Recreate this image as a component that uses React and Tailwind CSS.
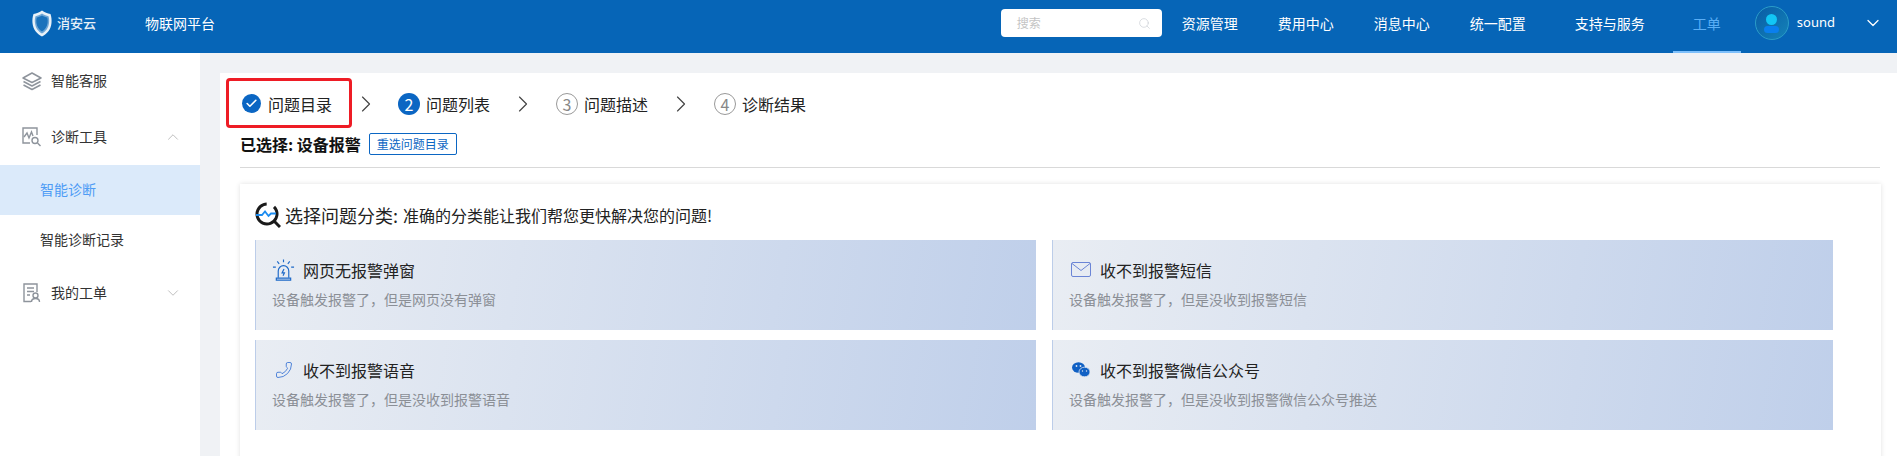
import React from 'react';
import { Check, ChevronDown, ChevronRight, ChevronUp, Phone, Search } from 'lucide-react';

const font = { fontFamily: '"Noto Sans CJK SC", "Noto Sans", sans-serif' };

const navItems = [
  { label: '资源管理', cls: 'ml-[20px]' },
  { label: '费用中心', cls: 'ml-[40px]' },
  { label: '消息中心', cls: 'ml-[40px]' },
  { label: '统一配置', cls: 'ml-[40px]' },
  { label: '支持与服务', cls: 'ml-[49px]' },
];

const Logo = () => (
  <svg width="20" height="27" viewBox="0 0 20 27" fill="none">
    <path d="M10 0.5 C12.5 2.5 15.5 3.5 18.5 4 C19.5 7 19.8 10 19.5 13 C19 19.5 15 24 10 26.5 C5 24 1 19.5 0.5 13 C0.2 10 0.5 7 1.5 4 C4.5 3.5 7.5 2.5 10 0.5Z" fill="#e8f1f8" />
    <path d="M10 3.5 C12.2 5 14.5 5.8 16.5 6.2 C17.2 8.5 17.4 10.8 17 13 C16.5 18 13.8 21.5 10 23.5 C6.2 21.5 3.5 18 3 13 C2.6 10.8 2.8 8.5 3.5 6.2 C5.5 5.8 7.8 5 10 3.5Z" fill="#6ea6d6" />
    <path d="M10 5.5 C12 6.6 13.8 7.2 15.3 7.6 C15.8 9.5 15.9 11.2 15.6 13 C15 17 13 19.8 10 21.6 C7 19.8 5 17 4.4 13 C4.1 11.2 4.2 9.5 4.7 7.6 C6.2 7.2 8 6.6 10 5.5Z" fill="#1a72bc" />
  </svg>
);

const Avatar = () => (
  <div className="w-[34px] h-[34px] rounded-full bg-gradient-to-br from-[#0a5ca6] to-[#1583b8] border border-[#2a9cc8] flex flex-col items-center justify-center gap-[1px]">
    <div className="w-[11px] h-[11px] rounded-full bg-[#12c6f5]" />
    <div className="w-[15px] h-[7px] shrink-0 rounded-[4px] bg-[#0a7fee]" />
  </div>
);

const StackIcon = () => (
  <svg width="20" height="20" viewBox="0 0 20 20" fill="none" stroke="#8e949c" strokeWidth="1.5" strokeLinejoin="round">
    <path d="M10 2 L19 7 L10 11.5 L1 7Z" />
    <path d="M1.5 10.5 L10 15 L18.5 10.5" />
    <path d="M1.5 14 L10 18.5 L18.5 14" />
  </svg>
);

const DiagnoseIcon = () => (
  <svg width="20" height="20" viewBox="0 0 20 20" fill="none" stroke="#8e949c" strokeWidth="1.4">
    <path d="M8 16 H1 V1 H15 V8" />
    <path d="M2 10 L5 6 L7 11 L9.5 5 L11 9" />
    <circle cx="13" cy="13.5" r="3" />
    <path d="M15.5 16 L18.5 19" />
  </svg>
);

const TicketIcon = () => (
  <svg width="20" height="20" viewBox="0 0 20 20" fill="none" stroke="#8e949c" strokeWidth="1.4">
    <path d="M9 18.5 H2 V1 H15 V9" />
    <path d="M5 5 H12 M5 8.5 H12 M5 12 H8" />
    <circle cx="13.5" cy="12.5" r="2.5" />
    <path d="M9.5 19 C9.5 16.5 11 15.5 13.5 15.5 C16 15.5 17.5 16.5 17.5 19" />
  </svg>
);

const SideItem = ({ icon, label, chevron }) => (
  <div className="h-[56px] pl-[22px] pr-[18px] flex items-center text-[14px] text-[#333]">
    <div className="w-[29px] shrink-0">{icon}</div>
    <span className="flex-1 pb-[1px]">{label}</span>
    {chevron === 'up' && <ChevronUp size={18} strokeWidth={1} color="#aaa" />}
    {chevron === 'down' && <ChevronDown size={18} strokeWidth={1} color="#aaa" />}
  </div>
);

const StepArrow = ({ cls = 'mx-[19px]' }) => (
  <ChevronRight size={28} strokeWidth={1} color="#444" className={cls + ' shrink-0'} />
);

const Step = ({ n, label, active }) => (
  <div className="flex items-center gap-[6px]">
    <div className={active
      ? 'w-[22px] h-[22px] rounded-full bg-[#0b66c3] text-white text-[16px] flex items-center justify-center'
      : 'w-[22px] h-[22px] rounded-full border border-[#999] text-[#888] text-[16px] flex items-center justify-center'}>
      {n}
    </div>
    <span className="text-[16px] text-[#222]">{label}</span>
  </div>
);

const BellIcon = () => (
  <svg width="24" height="24" viewBox="0 0 24 24" fill="none" stroke="#1c68c8" strokeWidth="1.2">
    <path d="M12 1 V4 M5.5 3 L7.5 5.5 M18.5 3 L16.5 5.5 M1 9 H4 M20 9 H23" />
    <path d="M6.5 20 V13 A5.5 5.5 0 0 1 17.5 13 V20" />
    <path d="M4.5 20.5 H19.5 V22.5 H4.5Z" />
    <path d="M12.5 11 L10.5 15 H13 L11.5 18" />
  </svg>
);

const MailIcon = () => (
  <svg width="20" height="16" viewBox="0 0 20 16" fill="none" stroke="#6b85d6" strokeWidth="1">
    <rect x="0.5" y="0.5" width="19" height="14" rx="1.5" />
    <path d="M1 1.5 L10 8.5 L19 1.5" />
  </svg>
);

const WechatIcon = () => (
  <svg width="18" height="16" viewBox="0 0 18 16">
    <ellipse cx="6.5" cy="5.5" rx="6.5" ry="5.2" fill="#1060c4" />
    <ellipse cx="12.5" cy="10" rx="5.5" ry="4.8" fill="#1060c4" stroke="#dfe6f0" strokeWidth="0.8" />
    <circle cx="4.5" cy="4" r="0.9" fill="#dfe6f0" />
    <circle cx="8.5" cy="4" r="0.9" fill="#dfe6f0" />
    <circle cx="10.5" cy="9" r="0.7" fill="#dfe6f0" />
    <circle cx="14.5" cy="9" r="0.7" fill="#dfe6f0" />
  </svg>
);

const LensIcon = () => (
  <svg width="26" height="26" viewBox="0 0 26 26" fill="none">
    <circle cx="12" cy="12" r="10" stroke="#1a1a1a" strokeWidth="3" strokeDasharray="50 8" transform="rotate(-20 12 12)" />
    <path d="M19.5 19.5 L25 25" stroke="#1a1a1a" strokeWidth="3" />
    <path d="M1 13 H7 L10 9.5 L13.5 14 L16 11.5 H21" stroke="#1c8cf0" strokeWidth="1.8" />
  </svg>
);

const cards = [
  { icon: <BellIcon />, title: '网页无报警弹窗', desc: '设备触发报警了，但是网页没有弹窗' },
  { icon: <MailIcon />, title: '收不到报警短信', desc: '设备触发报警了，但是没收到报警短信' },
  { icon: <Phone size={18} strokeWidth={1.2} color="#3f78d6" className="-scale-x-100" />, title: '收不到报警语音', desc: '设备触发报警了，但是没收到报警语音' },
  { icon: <WechatIcon />, title: '收不到报警微信公众号', desc: '设备触发报警了，但是没收到报警微信公众号推送' },
];

const IssueCard = ({ icon, title, desc }) => (
  <div className="h-[90px] pl-[16px] pt-[16px] border-l border-[#bccde9] bg-[linear-gradient(100deg,#e9edf3,#bfcfea)]">
    <div className="h-[28px] flex items-center">
      <div className="w-[31px] shrink-0 flex justify-center pr-[8px]">{icon}</div>
      <span className="text-[16px] text-[#222]">{title}</span>
    </div>
    <div className="mt-[4px] text-[14px] leading-[22px] text-[#8b8f96]">{desc}</div>
  </div>
);

export default function App() {
  return (
    <div style={font} className="w-[1897px] h-[456px] overflow-hidden bg-[#f0f2f5] flex flex-col">
      {/* header */}
      <header className="h-[53px] shrink-0 bg-[#0665b7] pb-[7px] flex items-center text-white text-[14px]">
        <div className="pl-[32px] flex items-center gap-[5px] w-[145px]">
          <Logo />
          <span className="text-[13px] font-medium text-[#e6f0f8]">消安云</span>
        </div>
        <span>物联网平台</span>
        <div className="ml-auto w-[161px] h-[28px] rounded-[4px] bg-white flex items-center justify-between pl-[16px] pr-[11px] text-[12px] text-[#c4c4c4]">
          <span>搜索</span>
          <Search size={13} strokeWidth={1.2} color="#c8ccd2" />
        </div>
        {navItems.map((item) => (
          <span key={item.label} className={item.cls}>{item.label}</span>
        ))}
        <div className="self-start ml-[28px] w-[68px] h-[53px] pb-[5px] flex items-center justify-center border-b-2 border-[#7ec0fb] text-[#5aaef5]">工单</div>
        <div className="ml-[14px]"><Avatar /></div>
        <span className="ml-[8px] text-[13px]" style={{ fontFamily: '"Noto Sans", sans-serif' }}>sound</span>
        <ChevronDown size={20} strokeWidth={1.5} className="ml-[28px] mr-[14px]" />
      </header>

      <div className="flex-1 flex min-h-0">
        {/* sidebar */}
        <aside className="w-[200px] shrink-0 bg-white">
          <SideItem icon={<StackIcon />} label="智能客服" />
          <SideItem icon={<DiagnoseIcon />} label="诊断工具" chevron="up" />
          <div className="h-[50px] bg-[#dbeafa] pl-[40px] pb-[1px] flex items-center text-[14px] text-[#4e9cf5]">智能诊断</div>
          <div className="h-[50px] pl-[40px] pb-[1px] flex items-center text-[14px] text-[#333]">智能诊断记录</div>
          <SideItem icon={<TicketIcon />} label="我的工单" chevron="down" />
        </aside>

        {/* content */}
        <main className="flex-1 pl-[20px] pt-[20px] min-w-0">
          <div className="h-full bg-white pl-[20px] pr-[17px] relative">
            <div className="absolute left-[6px] top-[5px] w-[126px] h-[50px] border-[3px] border-[#ee1c25] rounded-[4px]" />
            <div className="h-[61px] flex items-center">
              <div className="flex items-center gap-[7px] ml-[2px] mr-[2px]">
                <div className="w-[19px] h-[19px] rounded-full bg-[#0b66c3] flex items-center justify-center">
                  <Check size={13} strokeWidth={3} color="white" />
                </div>
                <span className="text-[16px] text-[#222]">问题目录</span>
              </div>
              <StepArrow cls="mx-[18px]" />
              <Step n="2" label="问题列表" active />
              <StepArrow />
              <Step n="3" label="问题描述" />
              <StepArrow />
              <Step n="4" label="诊断结果" />
            </div>
            <div className="h-[34px] flex items-center border-b border-[#d9d9d9] pb-[13px]">
              <span className="text-[16px] font-bold text-[#111]">已选择: 设备报警</span>
              <span className="ml-[8px] w-[88px] h-[22px] border border-[#0b66c3] rounded-[2px] flex items-center justify-center text-[12px] text-[#0b66c3]">重选问题目录</span>
            </div>

            <section className="mt-[16px] -mr-[1px] h-[400px] bg-white shadow-[0_0_5px_rgba(0,0,0,0.12)] pl-[15px] pr-[48px]">
              <div className="h-[56px] flex items-center pt-[6px]">
                <LensIcon />
                <span className="ml-[4px] text-[18px] text-[#222]">选择问题分类:</span>
                <span className="ml-[5px] text-[16px] text-[#222]">准确的分类能让我们帮您更快解决您的问题!</span>
              </div>
              <div className="grid grid-cols-2 gap-x-[16px] gap-y-[10px]">
                {cards.map((c) => (
                  <IssueCard key={c.title} {...c} />
                ))}
              </div>
            </section>
          </div>
        </main>
      </div>
    </div>
  );
}
